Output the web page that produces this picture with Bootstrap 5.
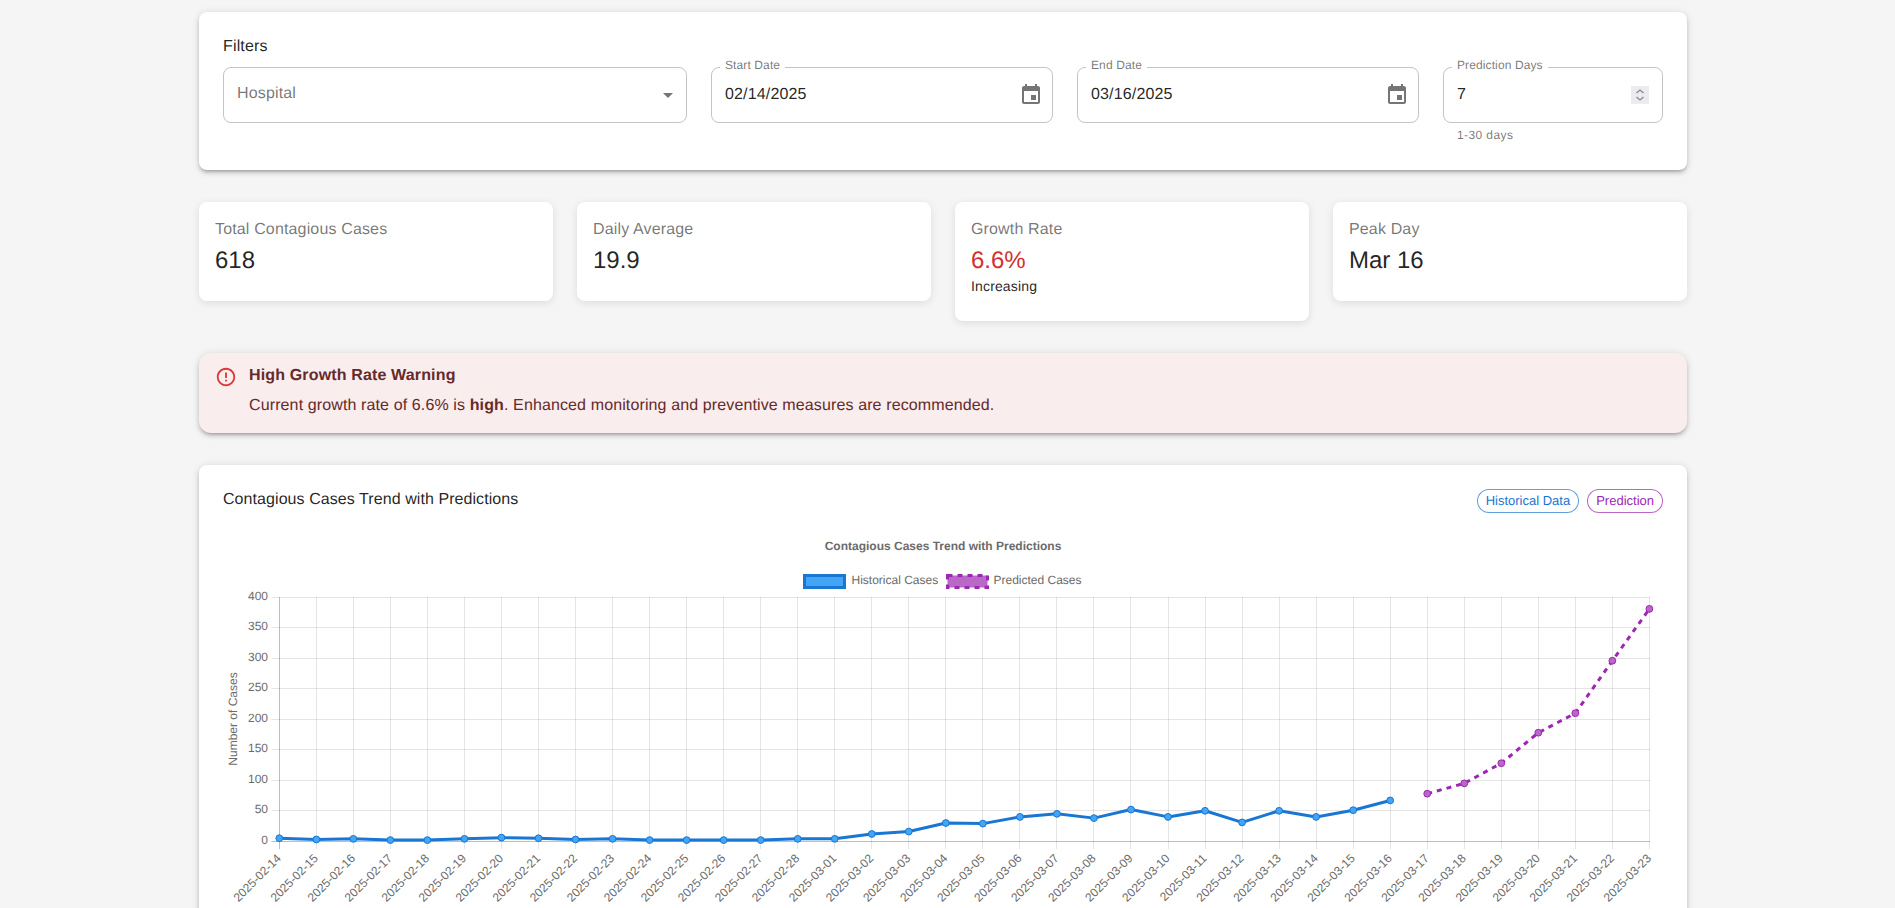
<!DOCTYPE html>
<html lang="en">
<head>
<meta charset="utf-8">
<title>Contagious Cases</title>
<link href="https://cdn.jsdelivr.net/npm/bootstrap@5.3.0/dist/css/bootstrap.min.css" rel="stylesheet">
<style>
body{background:#f5f5f5;font-family:"Liberation Sans",Arial,sans-serif;color:rgba(0,0,0,.87);font-size:16px;letter-spacing:.15px;height:908px;overflow:hidden;text-rendering:geometricPrecision}
.page-shell{padding:12px 9px 0 0}
.page-inner{width:1488px;margin:0 auto;display:flex;flex-direction:column;gap:32px}
.panel{background:#fff;border:0;border-radius:8px;box-shadow:0 3px 3px -2px rgba(0,0,0,.2),0 3px 4px 0 rgba(0,0,0,.14),0 1px 8px 0 rgba(0,0,0,.12)}
.panel-filter{padding:24px 24px 24px}
.panel-title{line-height:24px;margin:-1px 0 8px}
.field{position:relative;height:56px;border:1px solid rgba(0,0,0,.23);border-radius:8px;display:flex;align-items:center;padding:0 9px 0 13px}
.field-val{flex:1;line-height:24px;margin-top:-1px}
.field-ph{color:rgba(0,0,0,.55);margin-top:-3px}
.field-label{position:absolute;left:8px;top:-11px;background:#fff;padding:0 5px;font-size:12px;line-height:16px;color:rgba(0,0,0,.55);letter-spacing:.11px}
.field-hint{font-size:12px;line-height:20px;letter-spacing:.4px;color:rgba(0,0,0,.55);margin:2px 0 1px 14px}
.caret-down{width:0;height:0;border-left:5px solid transparent;border-right:5px solid transparent;border-top:5px solid rgba(0,0,0,.54);margin-right:4px}
.cal-ico{width:24px;height:24px;fill:rgba(0,0,0,.54);display:block}
.spin-box{width:18px;height:18px;background:#ebebf0;display:block;margin:0 4px 0 0}
.stat-panel{padding:16px 16px 24px;border-radius:8px;background:#fff;box-shadow:0 2px 8px rgba(0,0,0,.1)}
.stat-label{line-height:24px;color:rgba(0,0,0,.55);margin-bottom:3px}
.stat-value{font-size:24px;line-height:32px;letter-spacing:0}
.stat-sub{font-size:14px;line-height:20px;letter-spacing:.15px;margin:-1px 0 1px}
.val-red{color:#d32f2f}
.warn-box{background:#f9eded;color:#652a29;border-radius:12px;height:80px;padding:11px 16px 15px;display:flex;box-shadow:0 3px 3px -2px rgba(0,0,0,.2),0 3px 4px 0 rgba(0,0,0,.14),0 1px 8px 0 rgba(0,0,0,.12)}
.warn-ico{width:22px;height:22px;fill:#d9393a;margin:2px 12px 0 0;flex:none}
.warn-title{font-weight:700;line-height:24px;margin-bottom:6px}
.warn-text{line-height:24px;letter-spacing:.12px}
.panel-chart{padding:24px;height:560px}
.chart-title{font-size:16px;line-height:24px;letter-spacing:.07px;margin-top:-3px}
.tag{display:inline-flex;align-items:center;height:24px;border-radius:12px;font-size:13px;letter-spacing:0;padding:0 8px;border:1px solid;background:#fff}
.tag-blue{color:#1976d2;border-color:rgba(25,118,210,.7)}
.tag-purple{color:#9c27b0;border-color:rgba(156,39,176,.7)}
.chart-svg{display:block;margin-top:17px;overflow:visible}
.chart-svg text{font-family:"Liberation Sans",Arial,sans-serif;font-size:12px;fill:#6b6b6b;letter-spacing:0}
</style>
</head>
<body>
<div class="page-shell">
<div class="page-inner">

<div class="card panel panel-filter">
  <div class="panel-title">Filters</div>
  <div class="row g-4">
    <div class="col-4">
      <div class="field">
        <span class="field-val field-ph">Hospital</span>
        <span class="caret-down"></span>
      </div>
    </div>
    <div class="col-3">
      <div class="field">
        <span class="field-label">Start Date</span>
        <span class="field-val">02/14/2025</span>
        <svg class="cal-ico" viewBox="0 0 24 24"><path d="M17 12h-5v5h5v-5zM16 1v2H8V1H6v2H5c-1.11 0-1.99.9-1.99 2L3 19c0 1.1.89 2 2 2h14c1.1 0 2-.9 2-2V5c0-1.1-.9-2-2-2h-1V1h-2zm3 18H5V8h14v11z"/></svg>
      </div>
    </div>
    <div class="col-3">
      <div class="field">
        <span class="field-label">End Date</span>
        <span class="field-val">03/16/2025</span>
        <svg class="cal-ico" viewBox="0 0 24 24"><path d="M17 12h-5v5h5v-5zM16 1v2H8V1H6v2H5c-1.11 0-1.99.9-1.99 2L3 19c0 1.1.89 2 2 2h14c1.1 0 2-.9 2-2V5c0-1.1-.9-2-2-2h-1V1h-2zm3 18H5V8h14v11z"/></svg>
      </div>
      </div>
    <div class="col-2">
      <div class="field">
        <span class="field-label">Prediction Days</span>
        <span class="field-val">7</span>
        <svg class="spin-box" viewBox="0 0 18 18"><path d="M5.5 7 9 4l3.500 3M5.500 11 9 14l3.500-3" fill="none" stroke="#8a8a92" stroke-width="1.300"/></svg>
      </div>
      <div class="field-hint">1-30 days</div>
    </div>
  </div>
</div>

<div class="row g-4 align-items-start">
  <div class="col-3"><div class="stat-panel"><div class="stat-label">Total Contagious Cases</div><div class="stat-value">618</div></div></div>
  <div class="col-3"><div class="stat-panel"><div class="stat-label">Daily Average</div><div class="stat-value">19.9</div></div></div>
  <div class="col-3"><div class="stat-panel"><div class="stat-label">Growth Rate</div><div class="stat-value val-red">6.6%</div><div class="stat-sub">Increasing</div></div></div>
  <div class="col-3"><div class="stat-panel"><div class="stat-label">Peak Day</div><div class="stat-value">Mar 16</div></div></div>
</div>

<div class="warn-box">
  <svg class="warn-ico" viewBox="0 0 24 24"><path d="M11 15h2v2h-2zm0-8h2v6h-2zm.99-5C6.47 2 2 6.48 2 12s4.47 10 9.99 10C17.520 22 22 17.520 22 12S17.520 2 11.990 2zM12 20c-4.420 0-8-3.580-8-8s3.580-8 8-8 8 3.580 8 8-3.580 8-8 8z"/></svg>
  <div>
    <div class="warn-title">High Growth Rate Warning</div>
    <div class="warn-text">Current growth rate of 6.6% is <strong>high</strong>. Enhanced monitoring and preventive measures are recommended.</div>
  </div>
</div>

<div class="card panel panel-chart">
  <div class="d-flex justify-content-between align-items-center">
    <div class="chart-title">Contagious Cases Trend with Predictions</div>
    <div class="d-flex gap-2">
      <span class="tag tag-blue">Historical Data</span>
      <span class="tag tag-purple">Prediction</span>
    </div>
  </div>
  <svg id="trend" class="chart-svg" width="1440" height="400" viewBox="223 530 1440 400" xmlns="http://www.w3.org/2000/svg"></svg>
</div>

</div>
</div>
<script src="https://cdn.jsdelivr.net/npm/bootstrap@5.3.0/dist/js/bootstrap.bundle.min.js"></script>
<script>
(function(){
  var hist=[5,3,4,2,2,4,6,5,3,4,2,2,2,2,4,4,12,16,30,29,40,45,38,52,40,50,31,50,40,51,67];
  var pred=[78,95,128,178,210,296,381];
  var x0=279.3,step=37.03,y0=841.3,k=0.61;
  function X(i){return x0+i*step}
  function Y(v){return y0-v*k}
  function pad(n){return (n<10?'0':'')+n}
  var dates=[],i;
  for(i=14;i<=28;i++)dates.push('2025-02-'+pad(i));
  for(i=1;i<=23;i++)dates.push('2025-03-'+pad(i));
  var s='';
  function ln(a,b,c,d,col){s+='<line x1="'+a+'" y1="'+b+'" x2="'+c+'" y2="'+d+'" stroke="'+col+'" stroke-width="1"/>'}
  var g='rgba(0,0,0,.1)',ax='rgba(0,0,0,.25)';
  for(i=0;i<38;i++){var x=Math.round(X(i)-.5)+.5;ln(x,597,x,849,i==0?ax:g)}
  for(i=0;i<=8;i++){var y=Math.round(Y(i*50)-.5)+.5;ln(271.5,y,1650,y,i==0?ax:g);
    s+='<text x="268" y="'+(y+2.5)+'" text-anchor="end">'+(i*50)+'</text>'}
  dates.forEach(function(d,i){var x=X(i)+2.5;
    s+='<text transform="translate('+x+' 859) rotate(-45)" text-anchor="end">'+d+'</text>'});
  s+='<text transform="translate(237 719) rotate(-90)" text-anchor="middle">Number of Cases</text>';
  s+='<text x="943" y="550" text-anchor="middle" style="font-weight:700">Contagious Cases Trend with Predictions</text>';
  s+='<rect x="804.500" y="575.500" width="40" height="12" fill="#42a5f5" stroke="#1976d2" stroke-width="3"/>';
  s+='<text x="851.500" y="584">Historical Cases</text>';
  s+='<rect x="947.500" y="575.500" width="40" height="12" fill="#ba68c8" stroke="#9c27b0" stroke-width="3" stroke-dasharray="5 5"/>';
  s+='<text x="993.500" y="584">Predicted Cases</text>';
  s+='<polyline fill="none" stroke="#1976d2" stroke-width="3" stroke-linejoin="round" points="'+hist.map(function(v,i){return X(i)+','+Y(v)}).join(' ')+'"/>';
  s+='<polyline fill="none" stroke="#9c27b0" stroke-width="3" stroke-dasharray="5 5" points="'+pred.map(function(v,i){return X(i+31)+','+Y(v)}).join(' ')+'"/>';
  hist.forEach(function(v,i){s+='<circle cx="'+X(i)+'" cy="'+Y(v)+'" r="3.4" fill="#42a5f5" stroke="#1976d2"/>'});
  pred.forEach(function(v,i){s+='<circle cx="'+X(i+31)+'" cy="'+Y(v)+'" r="3.4" fill="#ba68c8" stroke="#9c27b0"/>'});
  document.getElementById('trend').innerHTML=s;
})();
</script>
</body>
</html>
